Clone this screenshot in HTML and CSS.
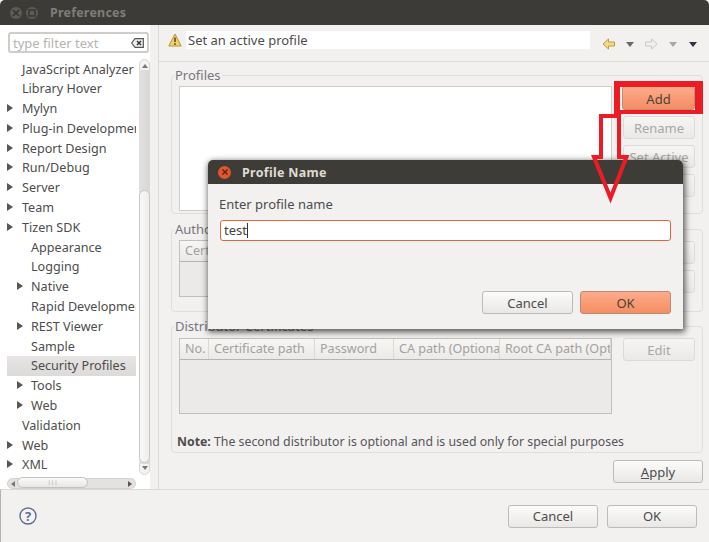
FILE: index.html

```html
<!DOCTYPE html>
<html lang="en">
<head>
  <meta charset="UTF-8" />
  <title>Preferences</title>
  <link rel="stylesheet" href="styles.css">
</head>
<body>
<div class="window">
  <div class="titlebar">
    <span class="win-btn">
      <svg width="8" height="8" viewBox="0 0 8 8"><path d="M1 1l6 6M7 1l-6 6" stroke="#34332f" stroke-width="1.6"/></svg>
    </span>
    <span class="win-btn">
      <svg width="8" height="8" viewBox="0 0 8 8"><rect x="1" y="1" width="6" height="6" fill="none" stroke="#34332f" stroke-width="1.4"/></svg>
    </span>
    <span class="win-title">Preferences</span>
  </div>

  <div class="main">
    <div class="sidebar">
      <div class="filter">
        <span class="filter-text">type filter text</span>
        <svg width="13" height="10" viewBox="0 0 13 10"><path d="M4 .7h8.3v8.6H4L.7 5z" fill="#eee" stroke="#555" stroke-width="1.2"/><path d="M6 3l4 4M10 3L6 7" stroke="#333" stroke-width="1.5"/></svg>
      </div>
      <div class="tree-wrap">
        <ul class="tree">
          <li>JavaScript Analyzer</li>
          <li>Library Hover</li>
          <li class="has-kids">Mylyn</li>
          <li class="has-kids">Plug-in Development</li>
          <li class="has-kids">Report Design</li>
          <li class="has-kids">Run/Debug</li>
          <li class="has-kids">Server</li>
          <li class="has-kids">Team</li>
          <li class="has-kids open">Tizen SDK</li>
          <li class="sub">Appearance</li>
          <li class="sub">Logging</li>
          <li class="sub has-kids">Native</li>
          <li class="sub">Rapid Development</li>
          <li class="sub has-kids">REST Viewer</li>
          <li class="sub">Sample</li>
          <li class="sub selected">Security Profiles</li>
          <li class="sub has-kids">Tools</li>
          <li class="sub has-kids">Web</li>
          <li>Validation</li>
          <li class="has-kids">Web</li>
          <li class="has-kids">XML</li>
        </ul>
        <div class="vscroll">
          <span class="tri-up"></span>
          <div class="vtrack"></div>
          <div class="vthumb"></div>
          <span class="tri-down"></span>
        </div>
      </div>
      <div class="hscroll">
        <span class="tri-left"></span>
        <div class="htrack"><div class="hthumb">|||</div></div>
        <span class="tri-right"></span>
      </div>
    </div>

    <div class="content">
      <div class="msgbar">
        <svg class="warn" width="14" height="14" viewBox="0 0 14 14"><path d="M7 1L13.2 13H.8z" fill="#f6cf6a" stroke="#b9933b" stroke-linejoin="round"/><path d="M7 4.5v4.6" stroke="#5a4a20" stroke-width="1.6"/><circle cx="7" cy="11" r=".9" fill="#5a4a20"/></svg>
        <div class="msg">Set an active profile</div>
        <div class="nav">
          <svg width="14" height="12" viewBox="0 0 14 12"><path d="M6.5 1L1 6l5.500 5V8h6V4h-6z" fill="#f5d98a" stroke="#c59a3c" stroke-linejoin="round"/></svg>
          <span class="drop"></span>
          <svg width="14" height="12" viewBox="0 0 14 12"><path d="M7.500 1L13 6l-5.500 5V8h-6V4h6z" fill="#f1f0ee" stroke="#c9c8c4" stroke-linejoin="round"/></svg>
          <span class="drop pale"></span>
          <span class="drop menu"></span>
        </div>
      </div>

      <div class="pane">
        <fieldset class="group profiles">
          <legend>Profiles</legend>
          <div class="listbox"></div>
          <div class="btn-col">
            <button class="btn hot add-btn">Add</button>
            <button class="btn off">Rename</button>
            <button class="btn off">Set Active</button>
            <button class="btn off">Remove</button>
          </div>
        </fieldset>

        <fieldset class="group authors">
          <legend>Author Certificate</legend>
          <div class="table">
            <div class="thead cols-author">
              <span>Certificate path</span><span>Password</span><span>CA path (Optional)</span><span>Root CA path (Optional)</span>
            </div>
          </div>
          <div class="btn-col">
            <button class="btn off">Remove</button>
            <button class="btn off"></button>
          </div>
        </fieldset>

        <fieldset class="group dist">
          <legend>Distributor Certificates</legend>
          <div class="dist-top">
            <div class="table">
              <div class="thead cols-dist">
                <span>No.</span><span>Certificate path</span><span>Password</span><span>CA path (Optional)</span><span>Root CA path (Optional)</span>
              </div>
            </div>
            <div class="btn-col">
              <button class="btn off">Edit</button>
            </div>
          </div>
          <p class="note"><b>Note:</b> The second distributor is optional and is used only for special purposes</p>
        </fieldset>

        <div class="apply-row">
          <button class="btn apply"><u>A</u>pply</button>
        </div>
      </div>
    </div>
  </div>

  <div class="footer">
    <svg width="18" height="18" viewBox="0 0 18 18"><circle cx="9" cy="9" r="8" fill="#f4f4f6" stroke="#5f6f8c" stroke-width="1.4"/><text x="9" y="13.500" text-anchor="middle" class="help-mark">?</text></svg>
    <div class="footer-btns">
      <button class="btn">Cancel</button>
      <button class="btn">OK</button>
    </div>
  </div>

  <div class="dialog">
    <div class="dlg-title">
      <span class="dlg-close"><svg width="8" height="8" viewBox="0 0 8 8"><path d="M1.500 1.500l5 5M6.500 1.500l-5 5" stroke="#5c1d0a" stroke-width="1.300"/></svg></span>
      <span class="dlg-name">Profile Name</span>
    </div>
    <div class="dlg-body">
      <div class="dlg-label">Enter profile name</div>
      <div class="dlg-input">test<span class="caret"></span></div>
      <div class="dlg-btns">
        <button class="btn">Cancel</button>
        <button class="btn hot">OK</button>
      </div>
    </div>
  </div>

  <svg class="marks" width="709" height="542" viewBox="0 0 709 542">
    <path d="M614 81H703V114H614zM620 87V110H695V87z" fill="#ed1c24"/>
    <path d="M601 157v-41h18v41h7.500L610.500 198 594 157z" fill="none" stroke="#ed1c24" stroke-width="4"/>
  </svg>
</div>
</body>
</html>
```

FILE: styles.css

```css
* { box-sizing: border-box; }
html, body { margin: 0; padding: 0; }
body { width: 709px; height: 542px; overflow: hidden; font-family: "Noto Sans", sans-serif; font-size: 13px; color: #4c4c4c; background: #f2f1f0; }
ul { list-style: none; margin: 0; padding: 0; }

.window { position: relative; width: 709px; height: 542px; display: flex; flex-direction: column; }

.titlebar { height: 25px; flex: none; background: #3c3b37; border-radius: 5px 5px 0 0; display: flex; align-items: center; padding-left: 10px; gap: 4px; }
.win-btn { width: 12px; height: 12px; border-radius: 50%; background: #5c5b56; display: flex; align-items: center; justify-content: center; }
.win-title { margin-left: 8px; color: #7f7e79; font-weight: 700; font-size: 12.500px; letter-spacing: .2px; }

.main { flex: 1; display: flex; min-height: 0; }

.sidebar { width: 159px; flex: none; border-right: 1px solid #dcdad7; background: linear-gradient(to right, #fff 150px, #f2f1f0 150px); padding-top: 7px; display: flex; flex-direction: column; }
.filter { margin-left: 8px; width: 141px; height: 21px; border: 2px solid #cfcdc9; border-radius: 3px; background: #fff; display: flex; align-items: center; justify-content: space-between; padding: 0 3px; }
.filter-text { color: #b4b3b0; font-size: 13px; }
.tree-wrap { margin-top: 6px; margin-left: 7px; display: flex; height: 416px; }
.tree { width: 129px; overflow: hidden; font-size: 12.600px; padding-top: .5px; }
.tree li { height: 19.800px; line-height: 19.800px; padding-left: 15px; white-space: nowrap; position: relative; }
.tree li.sub { padding-left: 24px; }
.tree li.selected { background: linear-gradient(#e6e5e3, #dcdbd9); }
.tree li.has-kids::before { content: ""; position: absolute; left: 0; top: 5px; border-left: 6px solid #57564f; border-top: 4px solid transparent; border-bottom: 4px solid transparent; }
.tree li.sub.has-kids::before { left: 10px; }
.tree li.open::before { border-left-color: #57564f; }

.vscroll { width: 11px; margin-left: 3px; background: #f4f3f2; border: 1px solid #d7d5d2; border-radius: 6px; display: flex; flex-direction: column; align-items: center; justify-content: space-between; padding: 4px 0; position: relative; }
.vtrack { position: absolute; left: -1px; right: -1px; top: 10px; bottom: 10px; background: linear-gradient(to right, #e2e1df, #d8d7d5); }
.vthumb { position: absolute; left: -1px; right: -1px; top: 130px; bottom: 11px; background: linear-gradient(to right, #f8f8f7, #eeedeb); border: 1px solid #c9c7c4; border-radius: 6px; }
.tri-up { border-bottom: 4px solid #777; border-left: 3px solid transparent; border-right: 3px solid transparent; }
.tri-down { border-top: 4px solid #777; border-left: 3px solid transparent; border-right: 3px solid transparent; }

.hscroll { margin: 3px 0 0 7px; width: 129px; height: 11px; background: #e3e2e0; border: 1px solid #d4d2cf; border-radius: 6px; display: flex; align-items: center; justify-content: space-between; padding: 0 3px; }
.tri-left { border-right: 4px solid #777; border-top: 3px solid transparent; border-bottom: 3px solid transparent; }
.tri-right { border-left: 4px solid #555; border-top: 3px solid transparent; border-bottom: 3px solid transparent; }
.htrack { flex: 1; height: 11px; margin: 0 4px 0 2px; }
.hthumb { width: 71px; height: 11px; margin-top: -1px; background: linear-gradient(#fbfbfa, #e6e5e3); border: 1px solid #c3c1be; border-radius: 6px; font-size: 6px; line-height: 9px; text-align: center; color: #999; }

.content { flex: 1; display: flex; flex-direction: column; min-width: 0; }
.msgbar { height: 37px; flex: none; border-bottom: 1px solid #dcdad7; display: flex; align-items: flex-start; padding: 6px 12px 0 9px; }
.warn { flex: none; margin-top: 2px; }
.msg { width: 404px; height: 18px; margin-left: 4px; background: #fff; line-height: 18px; padding-left: 2px; }
.nav { display: flex; align-items: center; margin: 7px 0 0 12px; }
.nav .drop { margin: 0 10px; border-top: 5px solid #6a6964; border-left: 4px solid transparent; border-right: 4px solid transparent; }
.nav .drop.pale { border-top-color: #a8a7a3; margin: 0 12px 0 11px; }
.nav .drop.menu { border-top-color: #2f2f45; margin: 0; }

.pane { flex: 1; padding: 5px 6px 0 12px; display: flex; flex-direction: column; }

.group { margin: 0; min-width: 0; padding: 0; border: 1px solid #e0dedb; border-radius: 4px; position: relative; display: flex; }
.group legend { padding: 0 1px; margin-left: -5px; line-height: 16px; color: #77767a; }
.group.profiles { height: 147px; padding: 3px 7px 0 7px; justify-content: space-between; }
.group.authors { height: 91px; margin-top: 7px; padding: 3px 7px 0 7px; justify-content: space-between; }
.group.dist { height: 135px; margin-top: 6px; padding: 4px 7px 0 7px; display: block; }
.dist-top { display: flex; justify-content: space-between; }

.listbox { width: 433px; height: 125px; background: #fff; border: 1px solid #cfcdca; }

.table { width: 433px; background: #ebeae9; border: 1px solid #c2c0bd; overflow: hidden; }
.authors .table { height: 57px; }
.dist .table { height: 76px; }
.thead { display: grid; height: 21px; border-bottom: 1px solid #b6b4b1; background: linear-gradient(#f7f6f5, #eceae8); color: #a2a19f; line-height: 20px; font-size: 12.600px; }
.thead span { padding-left: 5px; white-space: nowrap; overflow: hidden; border-right: 1px solid #dbd9d6; }
.cols-author { grid-template-columns: 130px 100px 110px 92px; }
.cols-dist { grid-template-columns: 29px 106px 79px 106px 111px; }

.btn-col { width: 73px; display: flex; flex-direction: column; }
.profiles .btn-col { gap: 6px; }
.authors .btn-col { gap: 6px; padding-top: 1px; }

.btn { font: inherit; color: #4c4c4c; height: 23px; padding: 0; border: 1px solid #bdbbb8; border-radius: 3px; background: linear-gradient(#fbfbfa, #e9e8e6); }
.btn.off { color: #a8a7a5; border-color: #dddbd8; background: linear-gradient(#f6f5f4, #ebe9e7); margin-left: 1px; }
.btn.hot { color: #4c4236; border-color: #b98c75; background: linear-gradient(#fcab8a, #f58d63); }
.add-btn { height: 24px; padding-top: 2px; }

.note { margin: 19px 0 0 -2px; line-height: 18px; color: #55545a; white-space: nowrap; font-size: 12.300px; }
.note b { color: #4c4c4c; }

.apply-row { display: flex; justify-content: flex-end; margin-top: 7px; }
.apply { width: 90px; }

.footer { height: 53px; flex: none; border-top: 1px solid #dcdad7; border-left: 1px solid #b5b3b0; display: flex; align-items: center; justify-content: space-between; padding: 0 12px 0 18px; }
.help-mark { font-family: "Noto Sans", sans-serif; font-size: 13px; font-weight: 700; fill: #5f6f8c; }
.footer-btns { display: flex; gap: 9px; }
.footer-btns .btn { width: 90px; }

.dialog { position: absolute; left: 208px; top: 160px; width: 475px; height: 169px; background: #f2f1f0; border-radius: 5px 5px 0 0; box-shadow: 1px 2px 6px 1px rgba(0, 0, 0, .65); display: flex; flex-direction: column; }
.dlg-title { height: 24px; flex: none; background: #3e3c37; border-radius: 5px 5px 0 0; display: flex; align-items: center; padding-left: 10px; }
.dlg-close { width: 13px; height: 13px; border-radius: 50%; background: #e0562d; display: flex; align-items: center; justify-content: center; }
.dlg-name { margin-left: 11px; color: #dfdbd2; font-weight: 700; font-size: 12.500px; letter-spacing: .3px; }
.dlg-body { flex: 1; padding: 12px 12px 15px 11px; display: flex; flex-direction: column; }
.dlg-label { line-height: 17px; }
.dlg-input { margin: 7px 0 0 1px; height: 21px; line-height: 19px; padding-left: 3px; background: #fff; border: 1px solid #e0673c; border-radius: 3px; display: flex; align-items: center; color: #444; }
.caret { width: 1px; height: 15px; background: #333; }
.dlg-btns { margin-top: auto; display: flex; justify-content: flex-end; gap: 7px; }
.dlg-btns .btn { width: 91px; }

.marks { position: absolute; left: 0; top: 0; }
```
